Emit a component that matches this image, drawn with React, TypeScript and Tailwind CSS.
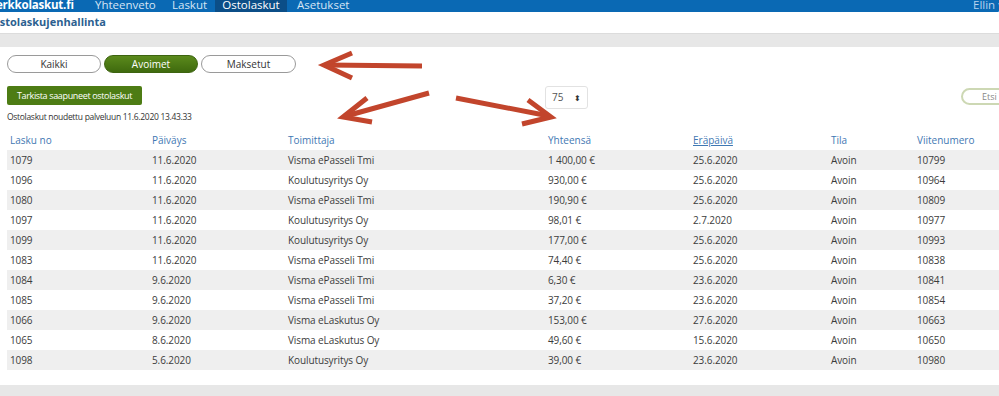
const rows = [
  ["1079", "11.6.2020", "Visma ePasseli Tmi", "1 400,00 €", "25.6.2020", "Avoin", "10799"],
  ["1096", "11.6.2020", "Koulutusyritys Oy", "930,00 €", "25.6.2020", "Avoin", "10964"],
  ["1080", "11.6.2020", "Visma ePasseli Tmi", "190,90 €", "25.6.2020", "Avoin", "10809"],
  ["1097", "11.6.2020", "Koulutusyritys Oy", "98,01 €", "2.7.2020", "Avoin", "10977"],
  ["1099", "11.6.2020", "Koulutusyritys Oy", "177,00 €", "25.6.2020", "Avoin", "10993"],
  ["1083", "11.6.2020", "Visma ePasseli Tmi", "74,40 €", "25.6.2020", "Avoin", "10838"],
  ["1084", "9.6.2020", "Visma ePasseli Tmi", "6,30 €", "23.6.2020", "Avoin", "10841"],
  ["1085", "9.6.2020", "Visma ePasseli Tmi", "37,20 €", "23.6.2020", "Avoin", "10854"],
  ["1066", "9.6.2020", "Visma eLaskutus Oy", "153,00 €", "27.6.2020", "Avoin", "10663"],
  ["1065", "8.6.2020", "Visma eLaskutus Oy", "49,60 €", "15.6.2020", "Avoin", "10650"],
  ["1098", "5.6.2020", "Koulutusyritys Oy", "39,00 €", "23.6.2020", "Avoin", "10980"],
];

const headers = ["Lasku no", "Päiväys", "Toimittaja", "Yhteensä", "Eräpäivä", "Tila", "Viitenumero"];

const cols = "grid grid-cols-[142px_136px_260px_145px_138px_86px_1fr]";

const Arrows = () => (
  <svg className="absolute left-0 top-0 pointer-events-none" width="999" height="396">
    <g stroke="#c2452c" strokeWidth="5" fill="none" strokeLinecap="butt" strokeLinejoin="miter">
      <path d="M422 66 L326 65" />
      <path d="M352 53 L324 65 L352 78" />
      <path d="M429 93 L346 116" />
      <path d="M367 98 L343 117 L372 122" />
      <path d="M456 98 L549 116" />
      <path d="M528 100 L551 117 L522 124" />
    </g>
  </svg>
);

const App = () => {
  return (
    <div className="relative w-[999px] h-[396px] overflow-hidden bg-white font-['Open_Sans',sans-serif]">
      <nav className="h-[12px] bg-[#0a69b4] overflow-hidden flex text-white text-[11.5px] leading-none whitespace-nowrap">
        <div className="shrink-0 w-[99px] -ml-[4px] flex items-end pb-[2px] font-bold tracking-[-0.2px]">erkkolaskut.fi</div>
        <div className="shrink-0 w-[77px] flex items-end pb-[2px] text-[#d6e5f4]">Yhteenveto</div>
        <div className="shrink-0 w-[43px] flex items-end pb-[2px] text-[#d6e5f4]">Laskut</div>
        <div className="shrink-0 w-[72px] bg-[#0b4e87] flex items-end justify-center pb-[2px]">Ostolaskut</div>
        <div className="shrink-0 pl-[10px] flex items-end pb-[2px] text-[#d6e5f4]">Asetukset</div>
        <div className="shrink-0 ml-auto -mr-[12px] w-[38px] flex items-end pb-[2px] text-[#b9d3ee]">Ellin y</div>
      </nav>

      <div className="h-[21px] flex items-center">
        <span className="-ml-[9px] text-[11px] font-bold text-[#2c5f90]">Ostolaskujenhallinta</span>
      </div>
      <div className="h-[14px] bg-[#e7e7e7] border-t border-[#dcdcdc]"></div>

      <div className="pl-[7px] pt-[8px] flex gap-[3px]">
        <button className="w-[94px] h-[18px] rounded-full border border-[#9a9a9a] bg-white text-[10px] text-[#333]">
          Kaikki
        </button>
        <button className="w-[94px] h-[18px] rounded-full border border-[#3d6410] bg-[linear-gradient(#5b8a1c,#3f6a0e)] text-[10px] text-white">
          Avoimet
        </button>
        <button className="w-[95px] h-[18px] rounded-full border border-[#9a9a9a] bg-white text-[10px] text-[#333]">
          Maksetut
        </button>
      </div>

      <div className="flex items-start mt-[13px] h-[45px]">
        <div className="ml-[7px] w-[135px] shrink-0 flex flex-col">
          <button className="w-[135px] h-[19px] rounded-[2px] bg-[#4d7c14] text-[9px] tracking-[-0.35px] text-white leading-none whitespace-nowrap">
            Tarkista saapuneet ostolaskut
          </button>
          <span className="mt-[6px] text-[8.5px] tracking-[-0.3px] text-[#333] whitespace-nowrap">
            Ostolaskut noudettu palveluun 11.6.2020 13.43.33
          </span>
        </div>
        <div className="ml-[403px] w-[43px] h-[23px] shrink-0 border border-[#e2e2e2] rounded-[3px] flex items-center justify-between px-[6px] text-[10px] text-[#555]">
          <span>75</span>
          <span className="text-[8px] leading-none text-[#333]">⬍</span>
        </div>
        <div className="ml-auto -mr-[14px] mt-[2px] w-[52px] h-[17px] shrink-0 rounded-full border-2 border-[#cdd8b4] flex items-center pl-[19px] text-[9px] text-[#888]">
          Etsi
        </div>
      </div>

      <div className="ml-[7px] mt-[-1px]">
        <div className={`${cols} h-[20px] items-center text-[#3f78b3] text-[10px]`}>
          {headers.map((h) => (
            <span key={h} className={`pl-[3px] ${h === "Eräpäivä" ? "underline" : ""}`}>
              {h}
            </span>
          ))}
        </div>
        {rows.map((r, i) => (
          <div
            key={r[0]}
            className={`${cols} h-[20px] items-center text-[10px] tracking-[-0.1px] text-[#3c3c3c] ${i % 2 === 0 ? "bg-[#efefef]" : "bg-white"}`}
          >
            {r.map((c, j) => (
              <span key={j} className="pl-[3px] whitespace-nowrap">
                {c}
              </span>
            ))}
          </div>
        ))}
      </div>

      <div className="absolute left-0 bottom-0 w-full h-[11px] bg-[#e7e7e7]"></div>
      <Arrows />
    </div>
  );
};

export default App;
